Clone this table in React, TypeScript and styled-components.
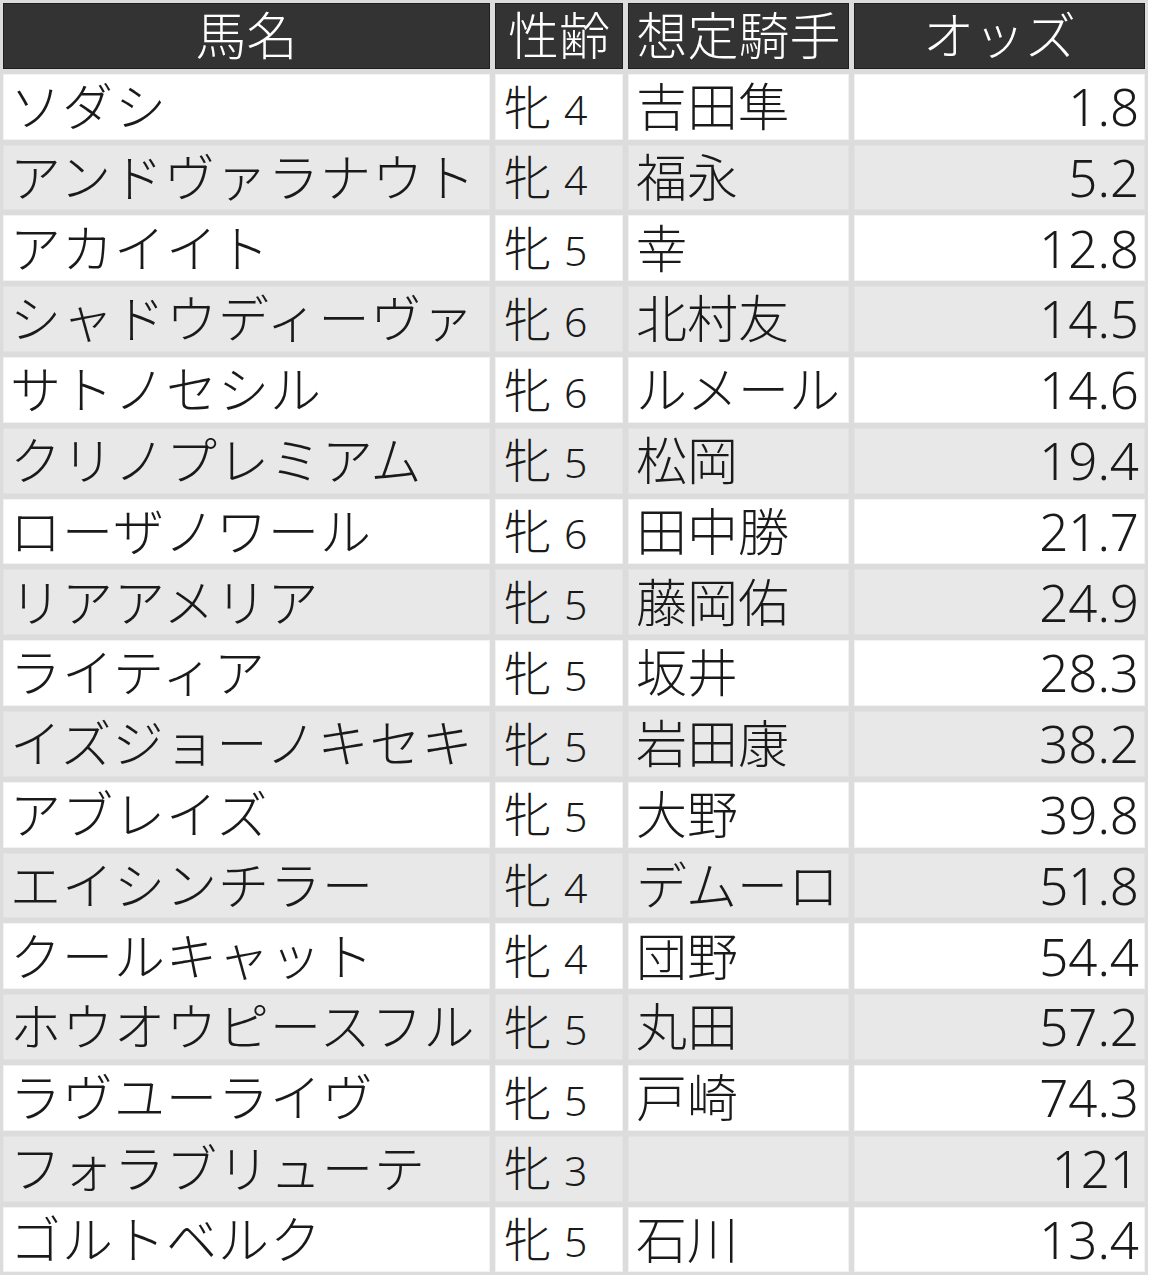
import React from "react";
import styled, { createGlobalStyle } from "styled-components";

const GlobalStyle = createGlobalStyle`
  html, body {
    margin: 0;
    padding: 0;
    background: #ffffff;
  }
  body {
    font-family: "Noto Sans", "Noto Sans CJK JP", sans-serif;
  }
`;

type Horse = {
  name: string;
  sex: string;
  age: number;
  jockey: string;
  odds: string;
};

const horses: Horse[] = [
  { name: "ソダシ", sex: "牝", age: 4, jockey: "吉田隼", odds: "1.8" },
  { name: "アンドヴァラナウト", sex: "牝", age: 4, jockey: "福永", odds: "5.2" },
  { name: "アカイイト", sex: "牝", age: 5, jockey: "幸", odds: "12.8" },
  { name: "シャドウディーヴァ", sex: "牝", age: 6, jockey: "北村友", odds: "14.5" },
  { name: "サトノセシル", sex: "牝", age: 6, jockey: "ルメール", odds: "14.6" },
  { name: "クリノプレミアム", sex: "牝", age: 5, jockey: "松岡", odds: "19.4" },
  { name: "ローザノワール", sex: "牝", age: 6, jockey: "田中勝", odds: "21.7" },
  { name: "リアアメリア", sex: "牝", age: 5, jockey: "藤岡佑", odds: "24.9" },
  { name: "ライティア", sex: "牝", age: 5, jockey: "坂井", odds: "28.3" },
  { name: "イズジョーノキセキ", sex: "牝", age: 5, jockey: "岩田康", odds: "38.2" },
  { name: "アブレイズ", sex: "牝", age: 5, jockey: "大野", odds: "39.8" },
  { name: "エイシンチラー", sex: "牝", age: 4, jockey: "デムーロ", odds: "51.8" },
  { name: "クールキャット", sex: "牝", age: 4, jockey: "団野", odds: "54.4" },
  { name: "ホウオウピースフル", sex: "牝", age: 5, jockey: "丸田", odds: "57.2" },
  { name: "ラヴユーライヴ", sex: "牝", age: 5, jockey: "戸崎", odds: "74.3" },
  { name: "フォラブリューテ", sex: "牝", age: 3, jockey: "", odds: "121" },
  { name: "ゴルトベルク", sex: "牝", age: 5, jockey: "石川", odds: "13.4" },
];

const Table = styled.div`
  width: 1148px;
  box-sizing: border-box;
  padding: 3px;
  display: flex;
  flex-direction: column;
  gap: 5px;
  background: #dcdcdc;
`;

const Row = styled.div`
  display: grid;
  grid-template-columns: 487px 128px 221px 291px;
  column-gap: 5px;
  height: 65.8px;
`;

const HeadCell = styled.div`
  display: flex;
  align-items: center;
  justify-content: center;
  box-sizing: border-box;
  background: #333333;
  border: 1px solid #1f1f1f;
  color: #ffffff;
  font-size: 51px;
  font-weight: 300;
  line-height: 1.2;
  white-space: nowrap;
`;

const Cell = styled.div<{ $shaded: boolean; $align?: "left" | "right" }>`
  display: flex;
  align-items: center;
  justify-content: ${(p) => (p.$align === "right" ? "flex-end" : "flex-start")};
  box-sizing: border-box;
  padding: ${(p) => (p.$align === "right" ? "0 5px 0 0" : "0 0 0 7px")};
  background: ${(p) => (p.$shaded ? "#e8e8e8" : "#ffffff")};
  border: 1px solid ${(p) => (p.$shaded ? "#e2e2e2" : "#f2f2f2")};
  color: #1a1a1a;
  font-size: 51px;
  font-weight: 300;
  line-height: 1.2;
  white-space: nowrap;
`;

const NameCell = styled(Cell)`
  padding-left: 6px;
  letter-spacing: 1px;
`;

const SexCell = styled(Cell)`
  font-size: 47px;
  padding-left: 8px;
`;

const Age = styled.span`
  font-size: 41px;
  font-weight: 300;
  margin-left: 13px;
`;

const App = () => {
  return (
    <>
      <GlobalStyle />
      <Table>
        <Row>
          <HeadCell>馬名</HeadCell>
          <HeadCell>性齢</HeadCell>
          <HeadCell>想定騎手</HeadCell>
          <HeadCell>オッズ</HeadCell>
        </Row>
        {horses.map((h, i) => {
          const shaded = i % 2 === 1;
          return (
            <Row key={h.name}>
              <NameCell $shaded={shaded}>{h.name}</NameCell>
              <SexCell $shaded={shaded}>
                <span>
                  {h.sex}
                  <Age>{h.age}</Age>
                </span>
              </SexCell>
              <Cell $shaded={shaded}>{h.jockey}</Cell>
              <Cell $shaded={shaded} $align="right">
                {h.odds}
              </Cell>
            </Row>
          );
        })}
      </Table>
    </>
  );
};

export default App;
